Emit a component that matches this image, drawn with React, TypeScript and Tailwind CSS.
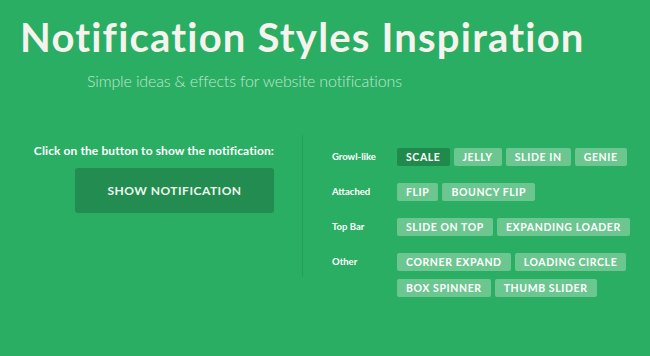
import React from "react";

const groups = [
  { label: "Growl-like", items: ["SCALE", "JELLY", "SLIDE IN", "GENIE"] },
  { label: "Attached", items: ["FLIP", "BOUNCY FLIP"] },
  { label: "Top Bar", items: ["SLIDE ON TOP", "EXPANDING LOADER"] },
  { label: "Other", items: ["CORNER EXPAND", "LOADING CIRCLE", "BOX SPINNER", "THUMB SLIDER"] },
];

export default function App() {
  return (
    <div className="h-[356px] w-[650px] overflow-hidden bg-[#29ae63] font-['Lato',sans-serif] text-white">
      <header className="pt-[13px]">
        <h1 className="pl-[20px] text-[40px] font-bold leading-[48px] tracking-[1.2px] text-[#f6f3ee]">
          Notification Styles Inspiration
        </h1>
        <p className="mt-[10px] pl-[87px] text-[16px] font-light leading-[20px] tracking-[-0.15px] text-[#c0e7cf]">
          Simple ideas &amp; effects for website notifications
        </p>
      </header>

      <main className="mt-[44px] flex">
        <div className="flex w-[302px] flex-col items-end pr-[28px] pt-[8px]">
          <p className="text-[12px] font-bold leading-[16px] tracking-[0.1px]">
            Click on the button to show the notification:
          </p>
          <button className="mt-[9px] h-[45px] w-[199px] rounded-[3px] bg-[#238d51] text-[12px] font-bold tracking-[0.5px] text-[#eef6f0]">
            SHOW NOTIFICATION
          </button>
        </div>

        <div className="h-[142px] w-px bg-[#23a159]" />

        <div className="flex flex-col gap-[17px] pl-[29px] pt-[13px]">
          {groups.map((g) => (
            <div key={g.label} className="flex items-start">
              <span className="w-[65px] text-[9.5px] font-bold leading-[18px]">{g.label}</span>
              <div className="flex w-[250px] flex-wrap gap-x-[4px] gap-y-[8px]">
                {g.items.map((item) => (
                  <span
                    key={item}
                    className={
                      item === "SCALE"
                        ? "h-[18px] rounded-[2px] bg-[#1f8a4c] px-[9px] text-[10.5px] font-bold leading-[18px] tracking-[0.6px]"
                        : "h-[18px] rounded-[2px] bg-[#6bc690] px-[9px] text-[10.5px] font-bold leading-[18px] tracking-[0.6px]"
                    }
                  >
                    {item}
                  </span>
                ))}
              </div>
            </div>
          ))}
        </div>
      </main>
    </div>
  );
}
